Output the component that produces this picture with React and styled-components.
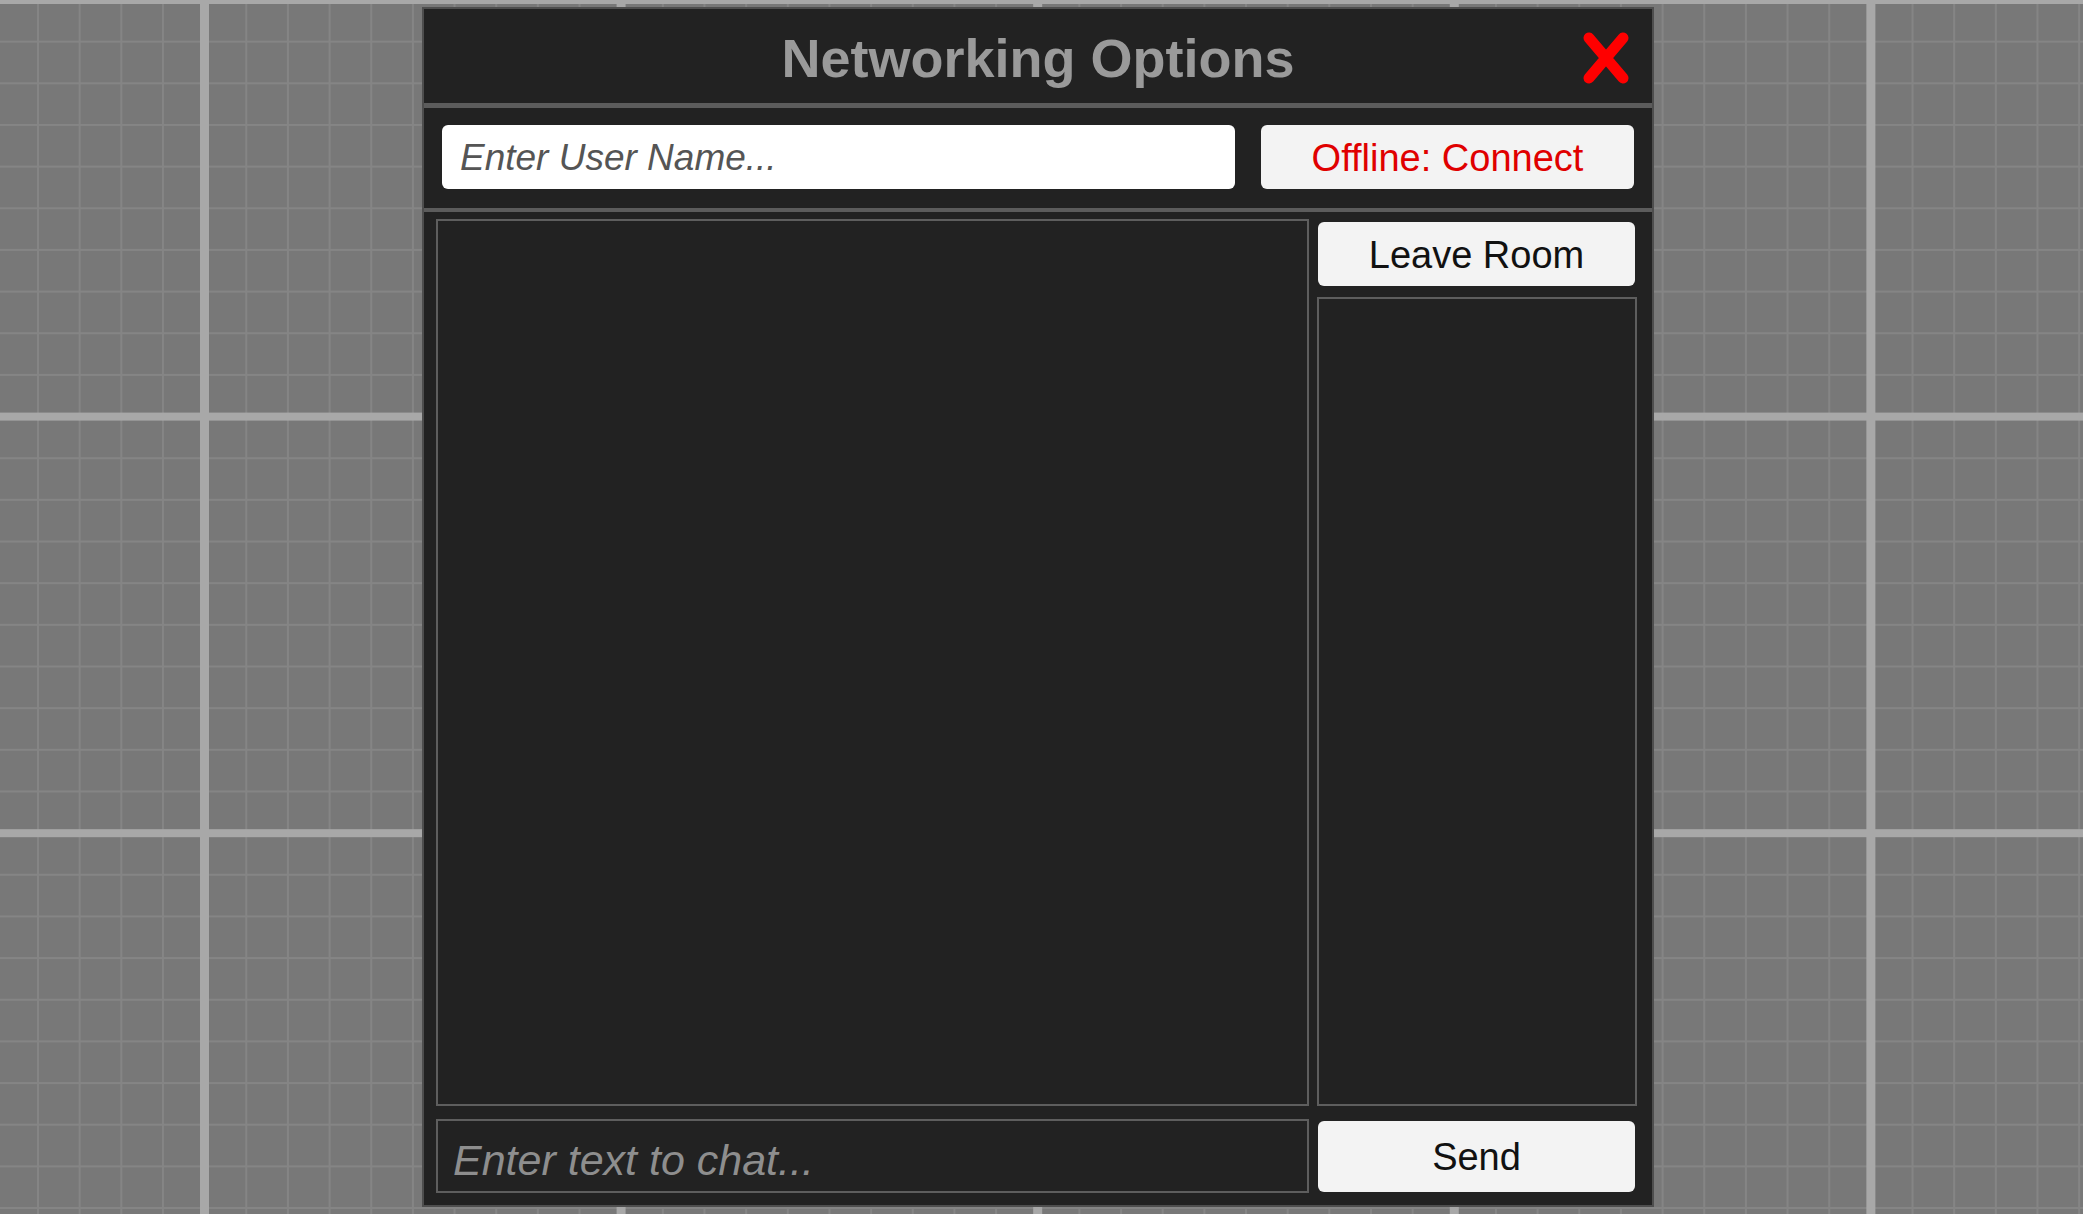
import React, { useState } from "react";
import styled, { createGlobalStyle } from "styled-components";

const GlobalStyle = createGlobalStyle`
  html, body {
    margin: 0;
    padding: 0;
  }
  body {
    font-family: "Liberation Sans", Arial, sans-serif;
    background-color: #787878;
    background-image:
      linear-gradient(90deg, #a8a8a8 0 9px, transparent 9px),
      linear-gradient(180deg, #a8a8a8 0 8px, transparent 8px),
      linear-gradient(90deg, #858585 0 2px, transparent 2px),
      linear-gradient(180deg, #858585 0 2px, transparent 2px);
    background-size:
      416.6px 100%,
      100% 416.6px,
      41.66px 100%,
      100% 41.66px;
    background-position:
      200px 0,
      0 -4px,
      37px 0,
      0 -1px;
    min-height: 100vh;
  }
`;

const Page = styled.div`
  padding: 7px 0 0 422px;
  box-sizing: border-box;
  min-height: 100vh;
`;

const Dialog = styled.div`
  width: 1232px;
  height: 1200px;
  box-sizing: border-box;
  border: 2px solid #4e4e4e;
  background: #222222;
  display: flex;
  flex-direction: column;
`;

const Header = styled.div`
  height: 94px;
  flex-shrink: 0;
  display: grid;
  grid-template-columns: 1fr auto 1fr;
  align-items: center;
  border-bottom: 5px solid #5c5c5c;
`;

const Title = styled.h1`
  grid-column: 2;
  margin: 0;
  font-size: 54px;
  font-weight: 700;
  color: #9a9a9a;
  padding-top: 3px;
`;

const CloseButton = styled.button`
  grid-column: 3;
  justify-self: end;
  margin-right: 22px;
  margin-top: 3px;
  width: 48px;
  height: 54px;
  padding: 0;
  border: none;
  background: transparent;
  cursor: pointer;
  display: flex;
  align-items: center;
  justify-content: center;
`;

const TopRow = styled.div`
  height: 104px;
  flex-shrink: 0;
  box-sizing: border-box;
  padding: 17px 18px 19px 18px;
  display: flex;
  gap: 26px;
  border-bottom: 4px solid #5c5c5c;
`;

const NameInput = styled.input`
  flex: 1;
  min-width: 0;
  height: 64px;
  box-sizing: border-box;
  border: none;
  border-radius: 6px;
  background: #ffffff;
  padding: 2px 0 0 18px;
  font-family: inherit;
  font-size: 37px;
  font-style: italic;
  color: #333;
  outline: none;
  &::placeholder {
    color: #555555;
  }
`;

const Button = styled.button`
  width: ${(p) => p.$width || "auto"};
  height: ${(p) => p.$height || "64px"};
  flex-shrink: 0;
  border: none;
  border-radius: 6px;
  background: #f3f3f3;
  color: ${(p) => p.$color || "#111111"};
  font-family: inherit;
  font-size: 38px;
  cursor: pointer;
  padding: 2px 0 0 0;
`;

const Body = styled.div`
  flex: 1;
  min-height: 0;
  padding: 7px 15px 12px 12px;
  display: grid;
  grid-template-columns: 873px 1fr;
  grid-template-rows: 1fr 74px;
  column-gap: 8px;
  row-gap: 13px;
`;

const Box = styled.div`
  box-sizing: border-box;
  border: 2px solid #5e5e5e;
  background: #222222;
`;

const SideColumn = styled.div`
  display: flex;
  flex-direction: column;
  gap: 11px;
  min-height: 0;
  padding-top: 3px;
  button {
    margin: 0 2px 0 1px;
  }
`;

const UserList = styled(Box)`
  flex: 1;
`;

const ChatInput = styled.input`
  box-sizing: border-box;
  width: 100%;
  height: 74px;
  border: 2px solid #5e5e5e;
  background: #222222;
  padding: 8px 0 0 15px;
  font-family: inherit;
  font-size: 43px;
  font-style: italic;
  color: #cccccc;
  outline: none;
  &::placeholder {
    color: #8e8e8e;
  }
`;

const SendWrap = styled.div`
  padding: 2px 2px 1px 1px;
  display: flex;
  button {
    flex: 1;
  }
`;

function CloseIcon() {
  return (
    <svg width="46" height="52" viewBox="0 0 46 52">
      <path
        d="M6 6 L40 46 M40 6 L6 46"
        stroke="#ff0000"
        strokeWidth="11"
        strokeLinecap="round"
        fill="none"
      />
    </svg>
  );
}

export default function App() {
  const [name, setName] = useState("");
  const [msg, setMsg] = useState("");

  return (
    <>
      <GlobalStyle />
      <Page>
        <Dialog>
          <Header>
            <Title>Networking Options</Title>
            <CloseButton aria-label="Close">
              <CloseIcon />
            </CloseButton>
          </Header>
          <TopRow>
            <NameInput
              placeholder="Enter User Name..."
              value={name}
              onChange={(e) => setName(e.target.value)}
            />
            <Button $width="373px" $color="#e00000">
              Offline: Connect
            </Button>
          </TopRow>
          <Body>
            <Box />
            <SideColumn>
              <Button>Leave Room</Button>
              <UserList />
            </SideColumn>
            <ChatInput
              placeholder="Enter text to chat..."
              value={msg}
              onChange={(e) => setMsg(e.target.value)}
            />
            <SendWrap>
              <Button $height="71px">Send</Button>
            </SendWrap>
          </Body>
        </Dialog>
      </Page>
    </>
  );
}
